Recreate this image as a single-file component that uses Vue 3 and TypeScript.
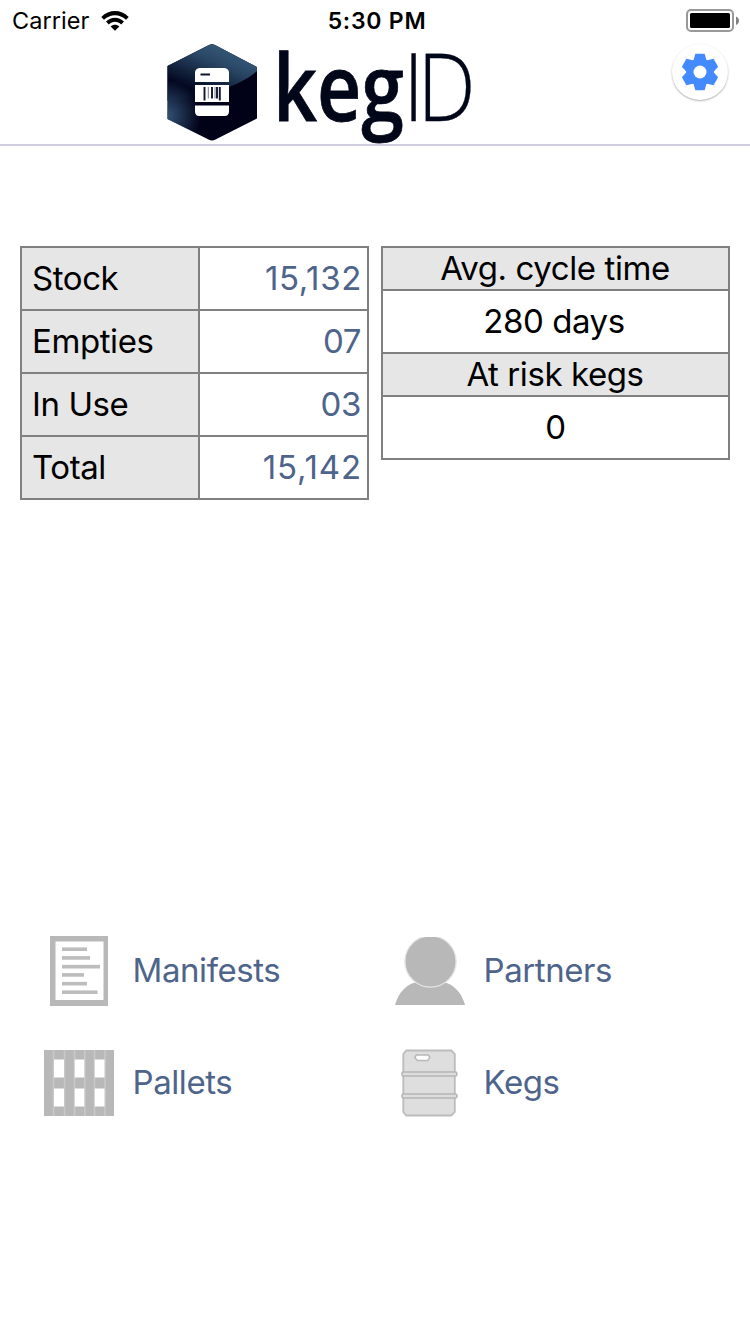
<script setup lang="ts">
interface StockRow {
  label: string
  value: string
  name: string
}

const stockRows: StockRow[] = [
  { label: 'Stock', value: '15,132', name: 'stock' },
  { label: 'Empties', value: '07', name: 'empties' },
  { label: 'In Use', value: '03', name: 'in-use' },
  { label: 'Total', value: '15,142', name: 'total' },
]

const cogTeeth: number[] = [0, 60, 120, 180, 240, 300]
const manifestLines: [number, number][] = [
  [12, 25], [20.7, 28], [29.5, 38], [37.7, 22], [46.5, 25], [55, 35.5],
]
</script>

<template>
  <main class="screen">
    <div class="status-bar">
      <div class="carrier">
        <span class="carrier-name">Carrier</span>
        <svg class="wifi" width="28" height="20" viewBox="0 0 28 20">
          <path d="M0.3 5.9C8 -1.9 20 -1.9 27.7 5.9L25 8.8C18.7 2.6 9.3 2.6 3 8.8Z" />
          <path d="M5 10.6C10.2 5.5 17.8 5.5 23 10.6L20.2 13.4C16.6 10 11.4 10 7.8 13.4Z" />
          <path d="M9.7 15.4C12.2 13.1 15.8 13.1 18.3 15.4L14 19.8Z" />
        </svg>
      </div>
      <span class="clock">5:30 PM</span>
      <svg class="battery" width="54" height="24" viewBox="0 0 54 24">
        <rect x="1" y="1" width="46" height="21" rx="4" fill="#fff" stroke="#999" stroke-width="2" />
        <rect x="4" y="4" width="40" height="15" rx="1.6" fill="#000" />
        <path d="M50 7.5C54 9 54 14.5 50 16Z" fill="#808080" />
      </svg>
    </div>

    <header class="header">
      <svg class="logo" width="310" height="104" viewBox="165 42 310 104">
        <defs>
          <linearGradient id="sheen" gradientUnits="userSpaceOnUse" x1="220" y1="43" x2="200" y2="92">
            <stop offset="0" stop-color="#38597a" />
            <stop offset="0.35" stop-color="#2a4866" />
            <stop offset="1" stop-color="#030820" />
          </linearGradient>
          <radialGradient id="glow" gradientUnits="userSpaceOnUse" cx="165" cy="116" r="36">
            <stop offset="0" stop-color="#36577a" />
            <stop offset="1" stop-color="#36577a" stop-opacity="0" />
          </radialGradient>
          <clipPath id="hex">
            <path d="M208.500 45.200Q212 43.200 215.500 45.200L257 67V118.500L215.500 139.500Q212 141.400 208.500 139.500L167.500 119V66Z" />
          </clipPath>
        </defs>
        <g clip-path="url(#hex)">
          <rect x="167" y="43" width="91" height="98" fill="#010218" />
          <path d="M167 43H258V70C240 87 205 97 167 101Z" fill="url(#sheen)" />
          <rect x="167" y="43" width="91" height="98" fill="url(#glow)" />
        </g>
        <path d="M199 68H225Q229 69 229 72.500V82H195V72.500Q195 69 199 68ZM195 85H229V102H195ZM195 105.500H229V112Q228.500 116 225 116H199Q195.500 116 195 112Z" fill="#fff" />
        <path d="M200.500 74.500H210M204.500 87V100.500M212 87V98.500M217 87V98.500M219.800 87V100.500" stroke="#11142e" stroke-width="1.900" />
        <path d="M208.300 87V98.500M215 87V98.500" stroke="#777a8c" stroke-width="1" />
        <text class="word-bold" x="273" y="120.500" textLength="131" lengthAdjust="spacingAndGlyphs">keg</text>
        <text class="word-light" transform="translate(403.300 121) scale(0.875 1)" x="0 16.300" y="0">ID</text>
      </svg>
      <button class="settings" aria-label="Settings">
        <svg width="38" height="38" viewBox="-19 -19 38 38">
          <g fill="#448aff">
            <circle r="13.300" />
            <path v-for="a in cogTeeth" :key="a" :transform="`rotate(${a})`" d="M-6.800 -11L-4.600 -18.300H4.600L6.800 -11Z" />
          </g>
          <circle r="6.500" fill="#fff" />
        </svg>
      </button>
    </header>

    <section class="summary">
      <div class="stock-table">
        <div v-for="row in stockRows" :key="row.label" class="stock-row" :class="row.name">
          <div class="stock-label"><span>{{ row.label }}</span></div>
          <div class="stock-value"><span>{{ row.value }}</span></div>
        </div>
      </div>
      <div class="cycle-table">
        <div class="cycle-title"><span>Avg. cycle time</span></div>
        <div class="cycle-value"><span>280 days</span></div>
        <div class="cycle-title"><span>At risk kegs</span></div>
        <div class="cycle-value risk"><span>0</span></div>
      </div>
    </section>

    <nav class="menu">
      <a class="item">
        <span class="icon">
          <svg width="58" height="70" viewBox="0 0 58 70">
            <rect width="58" height="70" fill="#b8b8b8" />
            <rect x="5.500" y="5.500" width="48" height="58.500" fill="#fff" />
            <rect v-for="[y, w] in manifestLines" :key="y" x="12" :y="y - 0.600" :width="w" height="3.600" fill="#bdbdbd" />
          </svg>
        </span>
        <span class="caption">Manifests</span>
      </a>
      <a class="item">
        <span class="icon">
          <svg width="70" height="70" viewBox="0 0 70 70">
            <path d="M0 69C3 57 12 47.500 21 46.500H49C58 47.500 67 57 70 69Z" fill="#b8b8b8" />
            <circle cx="35.500" cy="25.500" r="25.600" fill="#b8b8b8" stroke="#e4e4e4" stroke-width="1.300" />
            <rect width="70" height="1" fill="#fff" />
          </svg>
        </span>
        <span class="caption">Partners</span>
      </a>
      <a class="item">
        <span class="icon">
          <svg width="70" height="66" viewBox="0 0 70 66">
            <rect width="70" height="66" fill="#b8b8b8" />
            <path d="M9.500 0V66M20.500 0V66M30.500 0V66M40.800 0V66M50.500 0V66M61 0V66" stroke="#c8c8c8" stroke-width="1.600" />
            <path d="M10 9.500H20V27.500H10ZM30.700 9.500H40.300V27.500H30.700ZM50.700 9.500H60.500V27.500H50.700ZM10 38.500H20V56.500H10ZM30.700 38.500H40.300V56.500H30.700ZM50.700 38.500H60.500V56.500H50.700Z" fill="#fff" />
          </svg>
        </span>
        <span class="caption">Pallets</span>
      </a>
      <a class="item">
        <span class="icon">
          <svg width="58" height="68" viewBox="0.700 0 58 68">
            <path d="M6 1.500H51L54.500 5V63L51 66.500H6L3 63V5Z" fill="#dedede" stroke="#bcbcbc" stroke-width="1.800" />
            <path d="M16 6H28L29.500 8L27.500 11.500H17L14.500 8.500Z" fill="#fff" stroke="#b8b8b8" stroke-width="1.500" />
            <rect x="1.600" y="23" width="55" height="4" rx="1.500" fill="#dcdcdc" stroke="#b5b5b5" stroke-width="1.500" />
            <rect x="1.600" y="45" width="55" height="4" rx="1.500" fill="#dcdcdc" stroke="#b5b5b5" stroke-width="1.500" />
          </svg>
        </span>
        <span class="caption">Kegs</span>
      </a>
    </nav>
  </main>
</template>

<style>
body {
  margin: 0;
  background: #fff;
}
</style>

<style scoped>
.screen {
  box-sizing: border-box;
  width: 750px;
  height: 1334px;
  overflow: hidden;
  background: #fff;
  color: #000;
  font: 400 33px/40px Inter, "Liberation Sans", sans-serif;
  letter-spacing: -0.420px;
  white-space: nowrap;
}
.status-bar {
  display: grid;
  grid-template-columns: 1fr auto 1fr;
  align-items: center;
  box-sizing: border-box;
  height: 42px;
  padding: 0 10px 0 12px;
  font-size: 23.500px;
  line-height: 42px;
}
.carrier {
  display: flex;
  align-items: center;
  gap: 12px;
}
.carrier-name {
  letter-spacing: 0.050px;
}
.clock {
  padding-left: 2px;
  font-weight: 600;
  font-size: 23px;
  letter-spacing: 0.750px;
}
.battery {
  justify-self: end;
}
.header {
  display: flex;
  justify-content: space-between;
  box-sizing: border-box;
  height: 104px;
  padding: 0 22px 0 165px;
  border-bottom: 2px solid #d0cfe0;
}
.logo {
  display: block;
  flex: none;
  overflow: visible;
  letter-spacing: 0;
}
.word-bold {
  font: 600 92px "Open Sans", sans-serif;
  fill: #010619;
  stroke: #010619;
  stroke-width: 0.800px;
}
.word-light {
  font: 300 94px "Open Sans", sans-serif;
  fill: #010619;
  stroke: #010619;
  stroke-width: 0.300px;
}
.settings {
  display: grid;
  place-items: center;
  width: 56px;
  height: 56px;
  margin-top: 2px;
  padding: 0;
  border: 0;
  border-radius: 50%;
  background: #fff;
  box-shadow: 0 1px 2px rgba(0, 0, 0, 0.320);
}
.summary {
  display: grid;
  grid-template-columns: 349px 349px;
  gap: 12px;
  align-items: start;
  padding: 100px 20px 0;
}
.stock-table,
.cycle-table {
  border: 2px solid #808080;
}
.stock-row {
  display: grid;
  grid-template-columns: 178px 1fr;
  height: 61px;
  line-height: 61px;
}
.stock-row + .stock-row,
.cycle-table > * + * {
  border-top: 2px solid #808080;
}
.stock-label {
  padding-left: 10px;
  border-right: 2px solid #808080;
  background: #e6e6e6;
}
.stock-value {
  padding-right: 6px;
  color: #4e648b;
  letter-spacing: -0.400px;
  text-align: right;
}
.stock .stock-value {
  padding-right: 5px;
  letter-spacing: 0.650px;
}
.total .stock-value {
  padding-right: 5px;
  letter-spacing: 0.850px;
}
.cycle-title,
.cycle-value {
  text-align: center;
}
.cycle-title {
  height: 41px;
  padding-right: 1px;
  background: #e6e6e6;
  line-height: 41px;
}
.cycle-value {
  height: 61px;
  padding-right: 3px;
  line-height: 61px;
}
.risk {
  padding-right: 0;
}
.menu {
  display: grid;
  grid-template-columns: 351px 351px;
  grid-template-rows: 112px 112px;
  padding: 415px 0 0 44px;
}
.item {
  display: flex;
  align-items: center;
  gap: 18.500px;
  color: #4e648b;
}
.icon {
  display: flex;
  justify-content: center;
  width: 70px;
}
.caption {
  padding-bottom: 2px;
}
</style>
